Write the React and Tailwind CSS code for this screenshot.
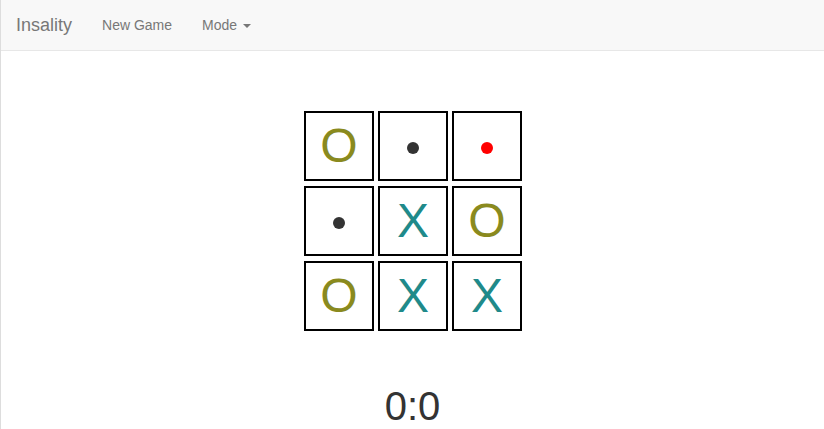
import React from "react";

const board = [
  ["O", ".", "r"],
  [".", "X", "O"],
  ["O", "X", "X"],
];

function Cell({ v }) {
  let content = null;
  if (v === "O") content = <span className="text-[48px] leading-none text-[#8a8a1e]">O</span>;
  else if (v === "X") content = <span className="text-[48px] leading-none text-[#1f8a8a]">X</span>;
  else if (v === ".") content = <div className="mt-[3px] h-[12px] w-[12px] rounded-full bg-[#333333]" />;
  else if (v === "r") content = <div className="mt-[3px] h-[12px] w-[12px] rounded-full bg-[#ff0000]" />;
  return (
    <div className="flex h-[70px] w-[70px] items-center justify-center border-2 border-black bg-white">
      {content}
    </div>
  );
}

export default function App() {
  return (
    <div className="min-h-[429px] border-l border-[#dddddd] bg-white font-['Liberation_Sans',Arial,sans-serif] text-[#333333]">
      <nav className="flex h-[51px] items-center border-b border-[#e7e7e7] bg-[#f8f8f8]">
        <span className="px-[15px] text-[18px] leading-[20px] text-[#777777]">Insality</span>
        <span className="px-[15px] text-[14px] leading-[20px] text-[#777777]">New Game</span>
        <span className="flex items-center px-[15px] text-[14px] leading-[20px] text-[#777777]">
          Mode
          <span className="ml-[6px] mt-[1px] h-0 w-0 border-x-[4px] border-t-[4px] border-x-transparent border-t-[#777777]" />
        </span>
      </nav>
      <div className="flex flex-col items-center">
        <div className="mt-[60px] ml-[1px] grid grid-cols-[70px_70px_70px] gap-x-[4px] gap-y-[5px]">
          {board.flat().map((v, i) => (
            <Cell key={i} v={v} />
          ))}
        </div>
        <div className="mt-[55px] text-[40px] leading-none">0:0</div>
      </div>
    </div>
  );
}
